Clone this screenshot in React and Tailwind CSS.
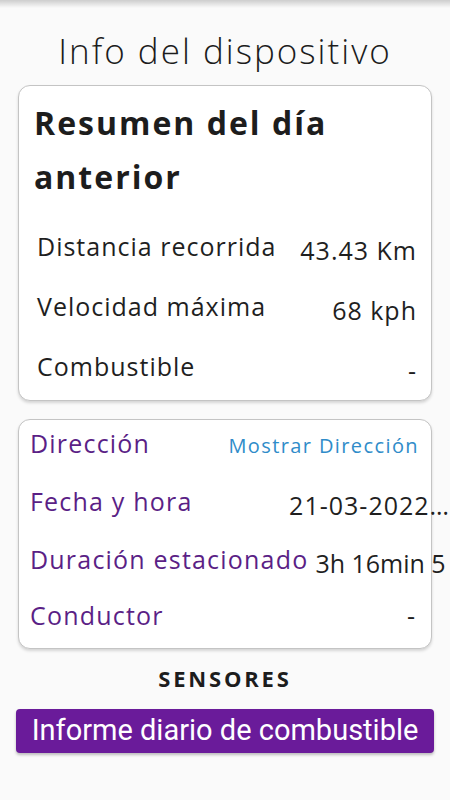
import React from "react";

const sans = { fontFamily: '"Open Sans", "Noto Sans", sans-serif' };

function Row({ label, value }) {
  return (
    <div className="flex items-baseline justify-between h-[60px]">
      <span className="text-[25px] tracking-[1px] text-[#1f1f1f] whitespace-nowrap">{label}</span>
      <span className="text-[25px] tracking-[1px] text-[#1f1f1f] whitespace-nowrap relative top-[4px] mr-[-1px]">{value}</span>
    </div>
  );
}

export default function App() {
  return (
    <div
      className="relative w-[450px] h-[800px] overflow-hidden bg-[#fafafa]"
      style={sans}
    >
      <div className="absolute top-0 left-0 right-0 h-[8px] bg-gradient-to-b from-[rgba(0,0,0,0.18)] to-transparent" />

      <h1 className="pt-[27px] text-center text-[35px] font-light leading-[48px] tracking-[2px] text-[#1c1c1c]">
        Info del dispositivo
      </h1>

      <div className="mx-[18px] mt-[10px] h-[316px] rounded-[12px] border border-[#c4c4c4] bg-white shadow-[0_2px_3px_rgba(0,0,0,0.15)] pl-[15px] pr-[15px]">
        <h2 className="pt-[10px] text-[32px] font-bold leading-[54px] tracking-[2px] text-[#1d1d1d]">
          Resumen del día
          <br />
          anterior
        </h2>
        <div className="pl-[3px] mt-[24px]">
          <Row label="Distancia recorrida" value="43.43 Km" />
          <Row label="Velocidad máxima" value="68 kph" />
          <Row label="Combustible" value="-" />
        </div>
      </div>

      <div className="mx-[18px] mt-[18px] h-[230px] rounded-[12px] border border-[#c4c4c4] bg-white shadow-[0_2px_3px_rgba(0,0,0,0.15)] pl-[11px] pr-[13px] pt-[5px]">
        <div className="flex items-baseline justify-between h-[58px]">
          <span className="text-[25px] tracking-[1.2px] text-[#5b1f86] whitespace-nowrap">Dirección</span>
          <span className="text-[20px] tracking-[1.4px] text-[#2f8cc9] whitespace-nowrap mr-[-1px]">Mostrar Dirección</span>
        </div>
        <div className="flex items-baseline h-[58px]">
          <span className="text-[25px] tracking-[1.2px] text-[#5b1f86] whitespace-nowrap">Fecha y hora</span>
          <span className="ml-auto mr-[-32px] shrink-0 text-[25px] tracking-[1px] text-[#1f1f1f] whitespace-nowrap relative top-[4px]">21-03-2022…</span>
        </div>
        <div className="flex items-baseline h-[56px]">
          <span className="text-[25px] tracking-[1.2px] text-[#5b1f86] whitespace-nowrap">Duración estacionado</span>
          <span className="ml-[7px] shrink-0 text-[25px] tracking-[0px] text-[#1f1f1f] whitespace-nowrap relative top-[4px]">3h 16min 5</span>
        </div>
        <div className="flex items-baseline justify-between h-[56px]">
          <span className="text-[25px] tracking-[1.2px] text-[#5b1f86] whitespace-nowrap">Conductor</span>
          <span className="text-[25px] text-[#1f1f1f] whitespace-nowrap pr-[3px]">-</span>
        </div>
      </div>

      <div className="mt-[14px] text-center text-[22px] font-bold leading-[30px] tracking-[2.8px] text-[#1d1d1d]">
        SENSORES
      </div>

      <div className="mx-[16px] mt-[16px] h-[44px] rounded-[4px] bg-[#6a1b9a] shadow-[0_2px_3px_rgba(0,0,0,0.25)] flex items-center justify-center">
        <span
          className="text-[29px] text-white whitespace-nowrap"
          style={{ fontFamily: 'Roboto, "Noto Sans", sans-serif' }}
        >
          Informe diario de combustible
        </span>
      </div>
    </div>
  );
}
